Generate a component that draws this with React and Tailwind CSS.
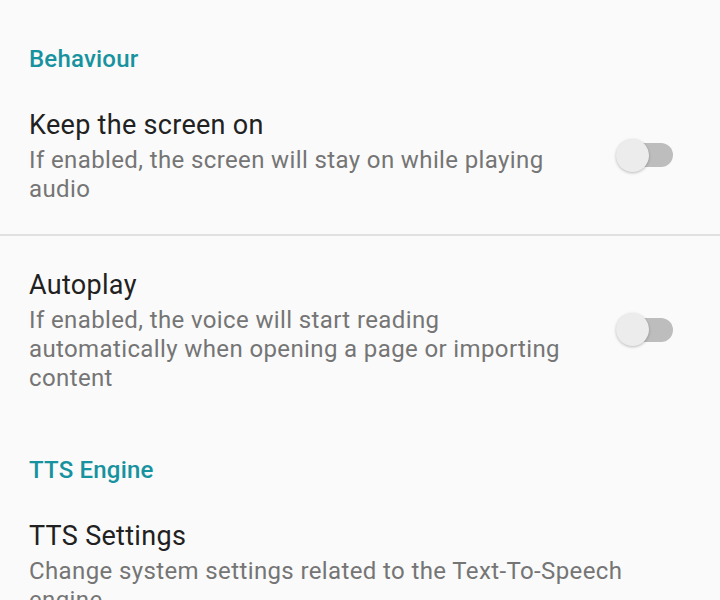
import React from 'react'

function Toggle(){
  return (
    <div className="relative w-[57px] h-[34px] flex items-center">
      <div className="absolute left-[6px] right-0 h-[24px] rounded-full bg-[#bdbdbd]" />
      <div className="absolute left-0 w-[33px] h-[33px] rounded-full bg-[#ececec] shadow-[0_1px_3px_rgba(0,0,0,0.25)]" />
    </div>
  )
}

function Category({ title, first }){
  return (
    <div className={`${first ? 'pt-[44px]' : 'pt-[32px]'} px-[29px] text-[24px] leading-[30px] tracking-[0.2px] font-medium text-[#17929f]`}>
      {title}
    </div>
  )
}

function Pref({ title, summary, toggle, top = 'pt-[35px]', last }){
  return (
    <div className={`flex items-center pl-[29px] ${top} ${last ? 'pr-[29px]' : 'pb-[30px]'}`}>
      <div className="flex-1 min-w-0">
        <div className="text-[27px] leading-[32px] tracking-[0.3px] text-[#212121]">{title}</div>
        <div className="mt-[5px] text-[24px] leading-[29px] tracking-[0.38px] text-[#757575]">{summary}</div>
      </div>
      {toggle && (
        <div className="ml-[31px] mr-[47px] -mt-[3px]"><Toggle /></div>
      )}
    </div>
  )
}

export default function App(){
  return (
    <div className="w-[720px] h-[600px] overflow-hidden bg-[#fafafa]" style={{ fontFamily: 'Roboto, "Noto Sans", sans-serif' }}>
      <Category title="Behaviour" first />
      <Pref title="Keep the screen on" summary="If enabled, the screen will stay on while playing audio" toggle />
      <div className="h-[2px] bg-[#e0e0e0]" />
      <Pref title="Autoplay" summary="If enabled, the voice will start reading automatically when opening a page or importing content" toggle top="pt-[33px]" />
      <Category title="TTS Engine" />
      <Pref title="TTS Settings" summary="Change system settings related to the Text-To-Speech engine" last />
    </div>
  )
}
